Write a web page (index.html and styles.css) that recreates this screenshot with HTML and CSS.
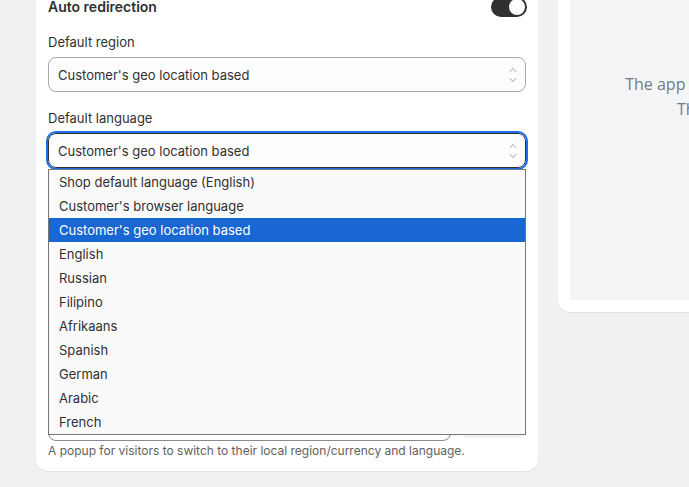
FILE: index.html
```html
<!DOCTYPE html>
<html lang="en">
<head>
<meta charset="utf-8">
<title>Auto redirection settings</title>
<link rel="stylesheet" href="styles.css">
</head>
<body>
<div class="layout">
  <section class="card card-main">
    <div class="card-header">
      <h2 class="card-title">Auto redirection</h2>
      <span class="toggle" role="switch" aria-checked="true"><span class="knob"></span></span>
    </div>

    <div class="field">
      <label class="label">Default region</label>
      <div class="select">
        <span class="select-value">Customer's geo location based</span>
        <svg class="chevrons" width="8" height="18" viewBox="0 0 8 18"><path d="M1 5.5 L4 2.5 L7 5.5 M1 12.5 L4 15.5 L7 12.5" fill="none" stroke="#9a9a9a" stroke-width="1" stroke-linecap="round" stroke-linejoin="round"/></svg>
      </div>
    </div>

    <div class="field">
      <label class="label">Default language</label>
      <div class="select-wrap">
        <div class="select select-focused">
          <span class="select-value">Customer's geo location based</span>
          <svg class="chevrons" width="8" height="18" viewBox="0 0 8 18"><path d="M1 5.5 L4 2.5 L7 5.5 M1 12.5 L4 15.5 L7 12.5" fill="none" stroke="#9a9a9a" stroke-width="1" stroke-linecap="round" stroke-linejoin="round"/></svg>
        </div>
        <ul class="dropdown">
          <li class="option">Shop default language (English)</li>
          <li class="option">Customer's browser language</li>
          <li class="option option-selected">Customer's geo location based</li>
          <li class="option">English</li>
          <li class="option">Russian</li>
          <li class="option">Filipino</li>
          <li class="option">Afrikaans</li>
          <li class="option">Spanish</li>
          <li class="option">German</li>
          <li class="option">Arabic</li>
          <li class="option">French</li>
        </ul>
      </div>
    </div>

    <div class="field">
      <label class="label">Popup style</label>
      <div class="select">
        <span class="select-value">Popup</span>
      </div>
    </div>

    <div class="field">
      <label class="label">Popup message</label>
      <div class="select">
        <span class="select-value">Switch region</span>
      </div>
    </div>

    <div class="check-row">
      <span class="checkbox"></span>
      <span class="check-label">Show popup on every visit</span>
    </div>

    <div class="field">
      <label class="label">Button label</label>
      <div class="input-row">
        <div class="text-input">Switch</div>
        <div class="btn">Save</div>
      </div>
      <p class="help">A popup for visitors to switch to their local region/currency and language.</p>
    </div>
  </section>

  <section class="card card-side">
    <div class="preview">
      <p class="preview-text">The app is not active in your theme.<br>This is a preview only.</p>
    </div>
  </section>
</div>
</body>
</html>
```

FILE: styles.css
```css
html, body {
  margin: 0;
  padding: 0;
}
body {
  background: #f1f1f1;
  font-family: Inter, "Noto Sans", sans-serif;
  color: #303030;
  overflow: hidden;
  height: 487px;
}
.layout {
  display: flex;
  align-items: flex-start;
  gap: 20px;
  padding-left: 36px;
  margin-top: -15px;
}
.card {
  background: #ffffff;
  border-radius: 12px;
  padding: 12px;
  box-shadow: 0 1px 0 rgba(0, 0, 0, 0.06);
  flex-shrink: 0;
}
.card-main {
  width: 478px;
  padding-bottom: 11px;
}
.card-header {
  display: flex;
  justify-content: space-between;
  align-items: center;
  height: 20px;
}
.card-title {
  margin: 0;
  font-size: 14px;
  line-height: 20px;
  font-weight: 600;
  color: #303030;
}
.toggle {
  width: 36px;
  height: 20px;
  border-radius: 10px;
  background: #303030;
  display: flex;
  align-items: center;
  justify-content: flex-end;
  padding-right: 2px;
  box-sizing: border-box;
  margin-right: -1px;
}
.knob {
  width: 16px;
  height: 16px;
  border-radius: 50%;
  background: #ffffff;
}
.field {
  margin-top: 15px;
}
.field + .field,
.check-row + .field {
  margin-top: 16px;
}
.label {
  display: block;
  font-size: 13px;
  line-height: 20px;
  color: #303030;
  margin-bottom: 5px;
}
.select {
  height: 35px;
  box-sizing: border-box;
  border: 1px solid #a8a8b0;
  border-radius: 8px;
  background: #fdfdfd;
  display: flex;
  align-items: center;
  justify-content: space-between;
  padding: 0 8px 0 9px;
  font-size: 13px;
}
.select-focused {
  border-color: #303030;
  outline: 2px solid #1c6ee8;
  outline-offset: 0px;
}
.select-value {
  line-height: 20px;
}
.chevrons {
  display: block;
}
.select-wrap {
  position: relative;
}
.dropdown {
  position: absolute;
  left: 0;
  top: 36px;
  width: 478px;
  box-sizing: border-box;
  margin: 0;
  padding: 0;
  list-style: none;
  background: #fafafa;
  border: 1px solid #767676;
  z-index: 5;
}
.option {
  height: 24px;
  line-height: 24px;
  padding-left: 10px;
  font-size: 13px;
  color: #303030;
}
.option-selected {
  background: #1967d2;
  color: #ffffff;
}
.check-row {
  display: flex;
  align-items: center;
  gap: 8px;
  height: 30px;
  margin-top: 16px;
  font-size: 13px;
}
.checkbox {
  width: 16px;
  height: 16px;
  border: 1px solid #8a8a8a;
  border-radius: 4px;
  box-sizing: border-box;
}
.input-row {
  display: flex;
  gap: 9px;
  align-items: flex-start;
}
.text-input {
  width: 403px;
  height: 34px;
  box-sizing: border-box;
  border: 1px solid #8a8a8a;
  border-radius: 8px;
  font-size: 13px;
  line-height: 32px;
  padding-left: 10px;
}
.btn {
  flex: 1;
  height: 31px;
  border-radius: 8px;
  background: #f1f1f1;
  font-size: 13px;
  line-height: 31px;
  text-align: center;
}
.help {
  margin: 1px 0 0;
  font-size: 12px;
  line-height: 18px;
  color: #616161;
}
.card-side {
  width: 376px;
}
.preview {
  background: #f4f5f7;
  height: 303px;
  box-sizing: border-box;
  padding-top: 75px;
}
.preview-text {
  margin: 0;
  text-align: center;
  font-family: "Open Sans", "Noto Sans", sans-serif;
  font-size: 16px;
  line-height: 25px;
  color: #737a86;
}
```
